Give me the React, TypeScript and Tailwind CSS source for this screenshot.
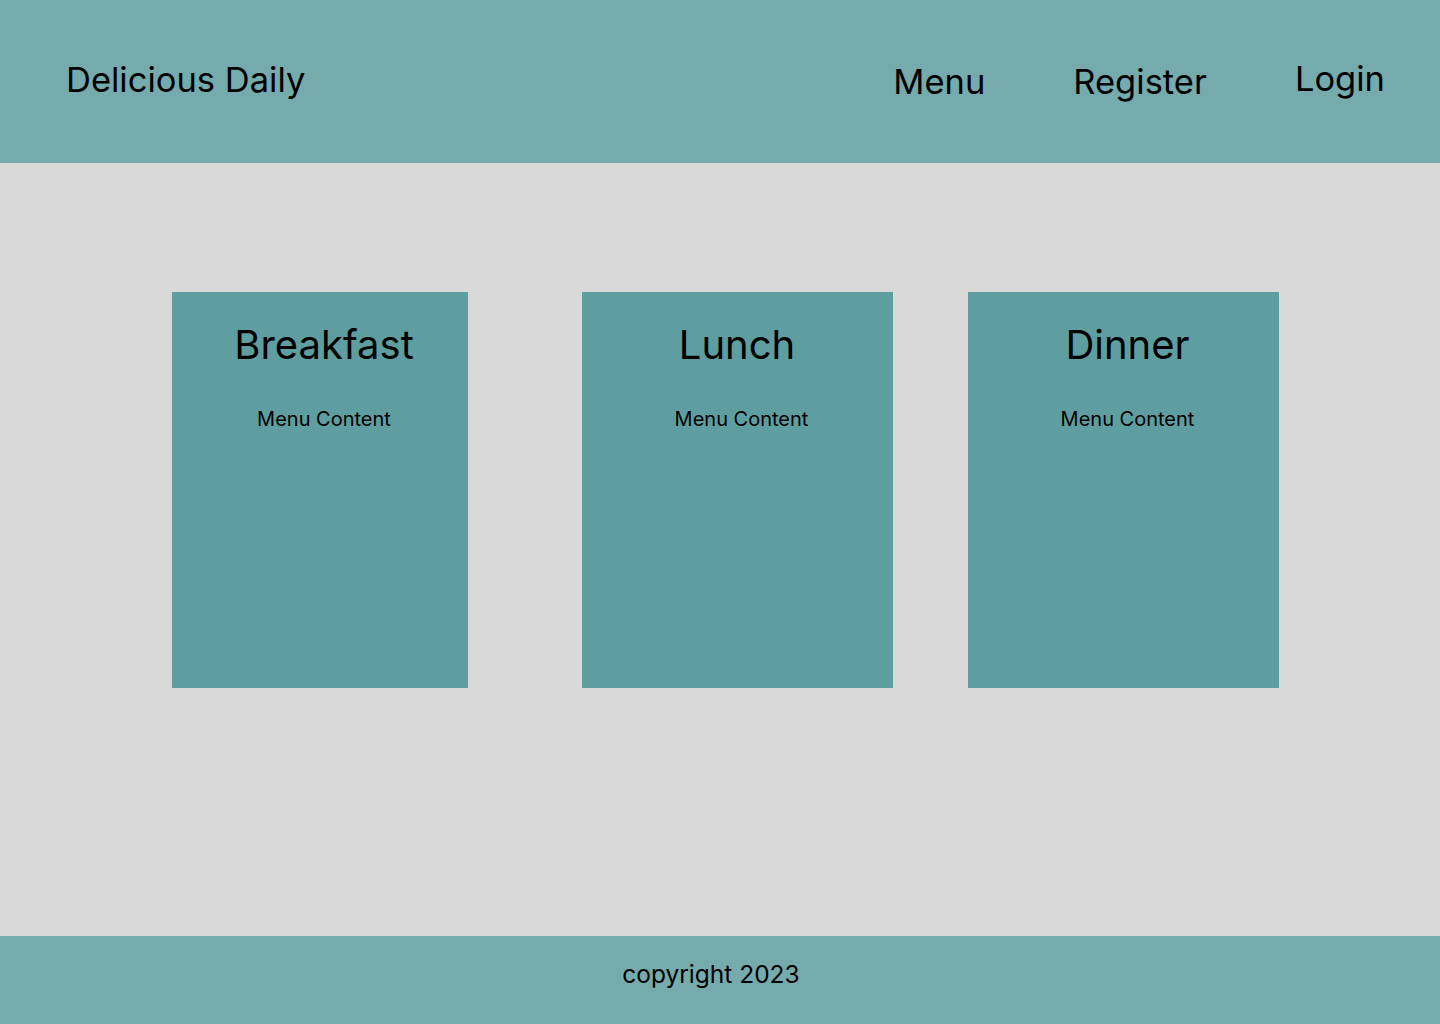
export default function App() {
  const meals = [
    { name: "Breakfast", width: "w-[296px]", margin: "ml-[172px]", titleShift: "" },
    { name: "Lunch", width: "w-[311px]", margin: "ml-[114px]", titleShift: "mr-[9px]" },
    { name: "Dinner", width: "w-[311px]", margin: "ml-[75px]", titleShift: "" },
  ];

  return (
    <div className="flex min-h-screen flex-col bg-[#d9d9d9] font-['Inter',sans-serif] text-black">
      <header className="flex h-[163px] bg-[#76abae] pl-[66px] pr-[55px]">
        <h1 className="mt-[63px] text-[34.5px] leading-none">Delicious Daily</h1>
        <nav className="ml-auto flex gap-[88px] text-[34.5px] leading-none">
          <a className="mt-[65px]">Menu</a>
          <a className="mt-[65px]">Register</a>
          <a className="mt-[62px]">Login</a>
        </nav>
      </header>

      <main className="flex flex-1 items-start pt-[129px]">
        {meals.map(meal => (
          <section
            key={meal.name}
            className={`${meal.width} ${meal.margin} flex h-[396px] flex-col items-center bg-[#5f9ea0] pl-[8px] pt-[33px]`}
          >
            <h2 className={`${meal.titleShift} text-[40px] leading-none`}>{meal.name}</h2>
            <p className="mt-[44px] text-[20px] leading-none">Menu Content</p>
          </section>
        ))}
      </main>

      <footer className="h-[88px] bg-[#76abae] pr-[18px] pt-[26px] text-center text-[24.5px] leading-none">
        copyright 2023
      </footer>
    </div>
  );
}
